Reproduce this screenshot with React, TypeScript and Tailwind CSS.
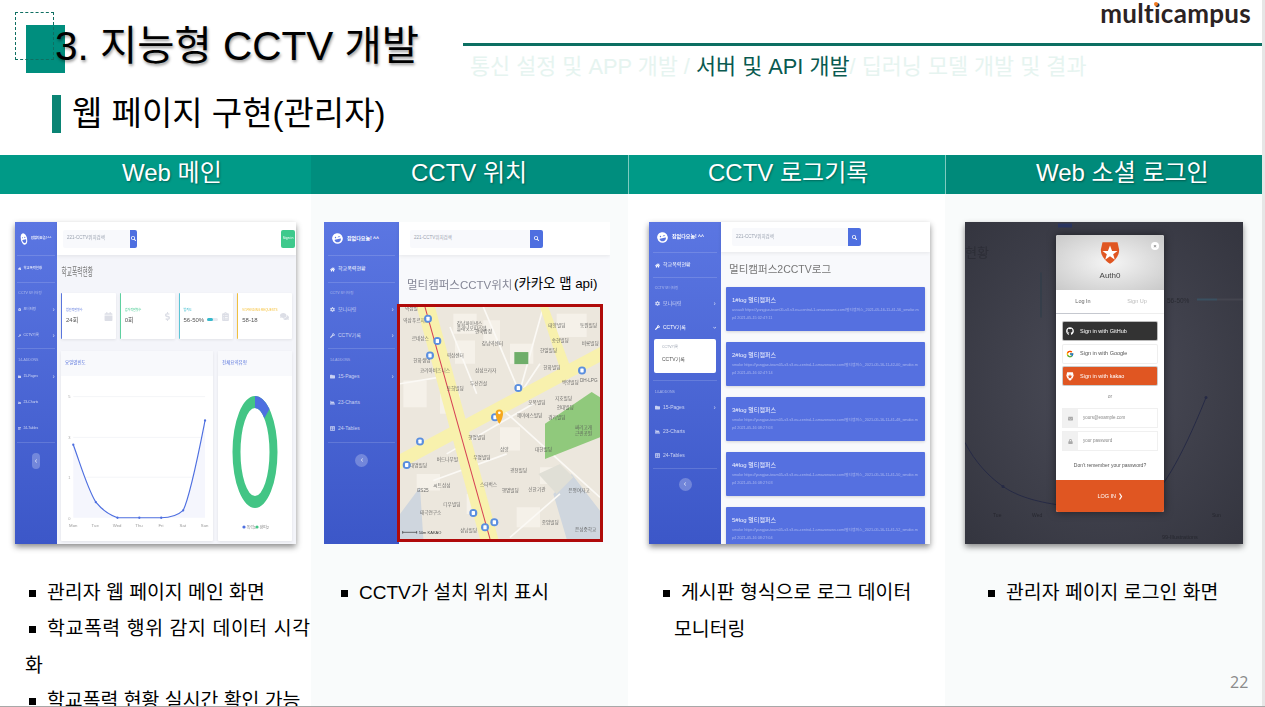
import React from 'react';
import { FaLaughWink, FaHome, FaCog, FaWrench, FaFolder, FaChartArea, FaTable, FaChevronRight, FaChevronLeft, FaChevronDown, FaSearch, FaGithub, FaEnvelope, FaLock, FaCalendar, FaDollarSign, FaClipboardList, FaComments } from 'react-icons/fa';
import { FcGoogle } from 'react-icons/fc';

const sideItems = (open: boolean, tiny: boolean) => {
  const row = open ? 'h-[24px]' : 'h-[26px]';
  return (
    <>
      <div className="mx-[5%] border-t border-white/15" />
      <Item row={row} tiny={tiny} icon={<FaHome />} label="학교폭력현황" strong />
      <div className="mx-[5%] border-t border-white/15" />
      <div className="pl-[8%] pt-[8px] text-[3.5px] text-white/50">CCTV 모니터링</div>
      <Item row={row} tiny={tiny} icon={<FaCog />} label="모니터링" arrow />
      <Item row={row} tiny={tiny} icon={<FaWrench />} label="CCTV기록" arrow={!open} down={open} strong={open} />
      {open && (
        <div className="mx-[5px] h-[34px] rounded-[2px] bg-white px-[8px] py-[6px] text-[#555]">
          <div className="text-[3.5px] text-gray-400">CCTV기록</div>
          <div className="mt-[5px] text-[5px]">CCTV기록</div>
        </div>
      )}
      <div className={`mx-[5%] border-t border-white/15 ${open ? 'mt-[7px]' : ''}`} />
      <div className="pl-[8%] pt-[9px] text-[3.5px] text-white/50">14-ADDONS</div>
      <Item row={row} tiny={tiny} icon={<FaFolder />} label="15-Pages" arrow />
      <Item row={row} tiny={tiny} icon={<FaChartArea />} label="23-Charts" />
      <Item row={row} tiny={tiny} icon={<FaTable />} label="24-Tables" />
      <div className="mx-[5%] border-t border-white/15" />
    </>
  );
};

function Item({ row, tiny, icon, label, arrow, down, strong }: { row: string; tiny: boolean; icon: React.ReactNode; label: string; arrow?: boolean; down?: boolean; strong?: boolean }) {
  return (
    <div className={`flex ${row} items-center ${tiny ? 'gap-[2px] pl-[3px] pr-[2px] text-[3.4px]' : 'gap-[3px] pl-[6px] pr-[5px] text-[5px]'} ${strong ? 'text-white' : 'text-white/70'}`}>
      <span>{icon}</span>
      <span className="flex-1 whitespace-nowrap">{label}</span>
      {arrow && <FaChevronRight className="text-[3.5px]" />}
      {down && <FaChevronDown className="text-[3.5px]" />}
    </div>
  );
}

function Sidebar({ width, head, children, tiny, circleTop }: { width: string; head: string; children: React.ReactNode; tiny?: boolean; circleTop: string }) {
  return (
    <div className={`${width} flex shrink-0 flex-col bg-gradient-to-b from-[#5b76e2] to-[#3c57c8]`}>
      <div className={`flex ${head} items-center ${tiny ? 'gap-[1px] pl-[3px]' : 'gap-[4px] pl-[8px]'}`}>
        <FaLaughWink className={`-rotate-12 text-white ${tiny ? 'scale-x-[0.55] text-[12px]' : 'text-[11px]'}`} />
        <span className={`whitespace-nowrap font-bold text-white ${tiny ? 'text-[3.2px]' : 'text-[5px]'}`}>잠없다요놈! ^^</span>
      </div>
      {children}
      <div className={`flex justify-center ${circleTop}`}>
        <div className={`flex items-center justify-center rounded-full bg-white/25 text-[4px] text-white/70 ${tiny ? 'h-[16px] w-[8px]' : 'h-[13px] w-[13px]'}`}>
          <FaChevronLeft />
        </div>
      </div>
    </div>
  );
}

function TopBar({ h, w, pad, btn, label, small }: { h: string; w: string; pad: string; btn: string; label: string; small?: boolean }) {
  return (
    <div className={`${h} ${pad} flex shrink-0 items-center justify-between bg-white pr-[1px] shadow-[0_1px_4px_rgba(0,0,0,0.08)]`}>
      <div className="flex items-center">
        <div className={`${w} flex h-[18px] items-center rounded-l-[2px] bg-[#f8f9fc] pl-[4px] text-[4.5px] text-gray-400`}>{label}</div>
        <div className={`${btn} flex h-[18px] items-center justify-center rounded-r-[2px] bg-[#4e6fe0] text-[5px] text-white`}>
          <FaSearch />
        </div>
      </div>
      {small && <div className="flex h-[18px] w-[14px] items-center justify-center rounded-[2px] bg-[#3ec98c] text-[3.5px] text-white">Sign in</div>}
    </div>
  );
}

const stats = [
  { label: '범인적발횟수', value: '24회', color: 'border-[#5a76dd]', text: 'text-[#5a76dd]', icon: <FaCalendar /> },
  { label: '검거적발횟수', value: '0회', color: 'border-[#5fd0a0]', text: 'text-[#3ec98c]', icon: <FaDollarSign /> },
  { label: '범죄도', value: '56-50%', color: 'border-[#5cc5d5]', text: 'text-[#36b9cc]', icon: <FaClipboardList />, bar: true },
  { label: '97-PENDING REQUESTS', value: '58-18', color: 'border-[#f0c040]', text: 'text-[#f6c23e]', icon: <FaComments /> },
];

function MainShot() {
  return (
    <Shot className="ml-[15px] w-[281px] blur-[0.5px]">
      <Sidebar width="w-[42px]" head="h-[33px]" tiny circleTop="mt-[10px]">{sideItems(false, true)}</Sidebar>
      <div className="flex min-w-0 flex-1 flex-col bg-[#f4f5fa]">
        <TopBar h="h-[33px]" pad="pl-[6px]" w="w-[67px]" btn="w-[7px]" label="221-CCTV위치검색" small />
        <div className="flex-1 px-[4px]">
          <div className="mt-[9px] origin-left scale-x-[0.52] whitespace-nowrap pl-[1px] text-[11px] leading-[16px] text-[#777]">학교폭력현황</div>
          <div className="mt-[13px] grid grid-cols-4 gap-[4px]">
            {stats.map(s => (
              <div key={s.label} className={`flex h-[46px] items-center rounded-[1px] border-l ${s.color} bg-white pl-[4px] pr-[3px] shadow-[0_1px_3px_rgba(0,0,0,0.08)]`}>
                <div className="min-w-0 flex-1">
                  <div className={`whitespace-nowrap text-[3px] ${s.text}`}>{s.label}</div>
                  <div className="mt-[3px] flex items-center gap-[3px] text-[6px] leading-[8px] text-[#555]">
                    <span>{s.value}</span>
                    {s.bar && <div className="h-[3px] flex-1 rounded-full bg-[#e8eaf0]"><div className="h-full w-1/2 rounded-full bg-[#36b9cc]" /></div>}
                  </div>
                </div>
                <span className="pl-[3px] text-[9px] text-[#dcdee6]">{s.icon}</span>
              </div>
            ))}
          </div>
          <div className="mt-[12px] flex h-[190px] gap-[5px]">
            <div className="flex w-[152px] flex-col rounded-[1px] bg-white shadow-[0_1px_3px_rgba(0,0,0,0.08)]">
              <div className="flex h-[25px] shrink-0 items-center bg-[#f8f9fc] pl-[4px] text-[4.5px] text-[#5a76dd]">요일별빈도</div>
              <svg viewBox="0 0 458 497" className="w-full flex-1">
                <path d="M37 62H434M37 185H434M37 305H434" stroke="#eef0f5" strokeWidth="2" />
                <path d="M37 207C60 270 80 340 105 380C125 405 145 418 170 427H302C330 427 350 422 368 405C390 360 415 230 434 134V427H37Z" fill="#f5f6fd" />
                <path d="M37 207C60 270 80 340 105 380C125 405 145 418 170 427H302C330 427 350 422 368 405C390 360 415 230 434 134" fill="none" stroke="#4e6fe0" strokeWidth="3.5" />
                {[[37, 207], [105, 380], [170, 427], [236, 427], [302, 427], [368, 405], [434, 134]].map(([x, y]) => (
                  <circle key={x} cx={x} cy={y} r="3.5" fill="#4e6fe0" />
                ))}
                {[[62, '5'], [185, '3'], [305, '1'], [430, '0']].map(([y, t]) => (
                  <text key={String(y)} x="22" y={Number(y) + 4} fontSize="12" fill="#aaa">{t}</text>
                ))}
                {['Mon', 'Tue', 'Wed', 'Thu', 'Fri', 'Sat', 'Sun'].map((d, i) => (
                  <text key={d} x={37 + i * 66} y="455" fontSize="13" textAnchor="middle" fill="#999">{d}</text>
                ))}
              </svg>
            </div>
            <div className="flex w-[74px] flex-col rounded-[1px] bg-white shadow-[0_1px_3px_rgba(0,0,0,0.08)]">
              <div className="flex h-[25px] shrink-0 items-center bg-[#f8f9fc] pl-[4px] text-[4.5px] text-[#5a76dd]">전체요역유형</div>
              <svg viewBox="0 0 74 165" className="w-full flex-1">
                <path fillRule="evenodd" d="M14.5 76A22.5 56 0 0 1 59.5 76A22.5 56 0 0 1 14.5 76ZM22.5 76A14.5 44 0 0 0 51.5 76A14.5 44 0 0 0 22.5 76Z" fill="#43c585" />
                <path d="M37 20A22.5 56 0 0 1 51.5 33L46.3 42.3A14.5 44 0 0 0 37 32Z" fill="#4e6fe0" />
                <circle cx="26" cy="151" r="1.6" fill="#4e6fe0" />
                <text x="28.5" y="153" fontSize="4" fill="#888">폭력1</text>
                <circle cx="39" cy="151" r="1.6" fill="#43c585" />
                <text x="41.5" y="153" fontSize="4" fill="#888">왕따2</text>
              </svg>
            </div>
          </div>
        </div>
      </div>
    </Shot>
  );
}

const busStops = [[84, 35], [112, 102], [90, 145], [355, 243], [285, 330], [546, 190], [60, 403], [20, 473], [220, 617], [255, 660], [283, 645]];
const mapLabels: [number, number, string][] = [
  [15, 10, '역삼빌'], [170, 55, '강남파이낸스'], [170, 70, '플래닛오피스텔'], [225, 78, '한국감정'], [245, 115, '강남역센터'], [10, 45, '역삼푸르지오'], [35, 100, '르네상스'],
  [140, 150, '역삼센터'], [40, 165, '한화생명'], [60, 195, '코리아비즈니스'], [225, 195, '삼성프라자'], [140, 250, '동희빌딩'], [210, 235, '두산건설'],
  [445, 60, '태양빌딩'], [540, 60, '동원빌딩'], [455, 105, '송현빌딩'], [545, 115, '비룡빌딩'], [420, 135, '한일빌딩'], [430, 185, '한화빌딩'], [540, 225, 'DH-LPG'],
  [485, 230, '백양빌딩'], [465, 280, '지호빌딩'], [385, 290, '오복빌딩'], [470, 305, '현대빌딩'], [350, 330, '제이에스빌딩'], [445, 335, '경리빌딩'], [205, 395, '행명빌딩'],
  [300, 430, '삼양'], [405, 430, '대한빌딩'], [220, 455, '우명빌딩'], [330, 495, '광천빌딩'], [110, 460, '버드나무빌'], [30, 480, '대명빌딩'], [240, 535, '스타벅스'],
  [100, 540, '씨트삼성'], [50, 555, 'GS25'], [130, 595, '디우빌딩'], [60, 620, '태극연구소'], [305, 555, '행명빌딩'], [385, 550, '신한기관'], [425, 650, '종암빌딩'],
  [505, 555, '은평여자고'], [525, 670, '은성중학교'], [525, 365, '싸리고개'], [525, 382, '근린공원'], [180, 675, '성남빌딩'],
];

function MapShot() {
  return (
    <div className="relative">
      <Shot className="ml-[13px] w-[286px]" light>
        <Sidebar width="w-[75px]" head="h-[33px]" circleTop="mt-[11px]">{sideItems(false, false)}</Sidebar>
        <div className="flex min-w-0 flex-1 flex-col bg-[#f8f9fc]">
          <TopBar h="h-[33px]" pad="pl-[11px]" w="w-[120px]" btn="w-[13px]" label="221-CCTV위치검색" />
          <div className="flex-1 pl-[8px]">
            <div className="mt-[20px] whitespace-nowrap text-[11.5px] leading-[20px] text-[#858796] blur-[0.4px]">멀티캠퍼스CCTV위치</div>
            <div className="-ml-[10px] mt-[9px] h-[238px] w-[206px] border-[3px] border-[#b00a0a] blur-[0.3px]">
              <svg viewBox="0 0 600 695" preserveAspectRatio="none" className="block h-full w-full">
                <rect width="600" height="695" fill="#ece7dd" />
                <path d="M160 20h70v60h-70zM165 100h60v70h-60zM10 220h70v80H10zM120 260h60v60h-60zM250 40h50v70h-50zM330 110h70v60h-70zM470 20h90v70h-90zM300 360h60v70h-60zM50 500h70v50H50zM350 600h70v60h-70zM200 560h40v60h-40zM420 480h50v50h-50z" fill="#f5f1e9" />
                <path d="M0 620L60 540 70 695H0ZM460 560L515 500 600 610V695H500Z" fill="#cfd6de" />
                <path d="M415 500L480 470 520 510 470 560Z" fill="#e0dfd6" />
                <path d="M250 0L360 260M150 60L230 260M0 230L120 210M300 300L600 570M140 440L400 290M100 520L320 440M330 690L480 560M360 260L420 170M430 0L360 250" stroke="#fbf9f5" strokeWidth="5" fill="none" />
                <path d="M435 350L575 255 600 270V390L435 455Z" fill="#90c97c" />
                <rect x="343" y="135" width="42" height="36" fill="#6fae6a" />
                <path d="M420 0H445L515 190 485 200Z" fill="#f8f1ad" />
                <path d="M0 440L600 120V165L0 485Z" fill="#f8f1ad" />
                <path d="M50 0H105L295 695H240Z" fill="#f8f1ad" />
                <path d="M75 0L270 695" stroke="#d64055" strokeWidth="3" />
                {mapLabels.map(([x, y, t]) => (
                  <text key={x + t} x={x} y={y} fontSize="14" fill="#555" opacity="0.85">{t}</text>
                ))}
                {busStops.map(([x, y]) => (
                  <g key={x + '-' + y}>
                    <circle cx={x} cy={y} r="12" fill="#5b8fdf" />
                    <rect x={x - 5} y={y - 6} width="10" height="12" rx="2" fill="#fff" />
                  </g>
                ))}
                <path d="M298 350C288 335 287 325 287 318A11 11 0 0 1 309 318C309 325 308 335 298 350Z" fill="#f5a81c" />
                <circle cx="298" cy="317" r="4" fill="#fff" />
                <path d="M8 675H50M8 671V679M50 671V679" stroke="#333" strokeWidth="2" />
                <text x="56" y="680" fontSize="12" fill="#333">50m KAKAO</text>
              </svg>
            </div>
          </div>
        </div>
      </Shot>
      {/* annotation typed over the screenshot */}
      <span className="absolute left-[203px] top-[54px] whitespace-nowrap text-[13.4px] leading-[16px] text-black">(카카오 맵 api)</span>
    </div>
  );
}

const logs = [
  ['1#log 멀티캠퍼스', 'assault https://yangjae-team05-s3.s3.eu-central-1.amazonaws.com/멀티캠퍼스_2021-05-16-11-41-56_smoke.mp4 2021-05-15 02:47:11'],
  ['2#log 멀티캠퍼스', 'smoke https://yangjae-team05-s3.s3.eu-central-1.amazonaws.com/멀티캠퍼스_2021-05-16-11-42-00_smoke.mp4 2021-05-16 02:47:14'],
  ['3#log 멀티캠퍼스', 'smoke https://yangjae-team05-s3.s3.eu-central-1.amazonaws.com/멀티캠퍼스_2021-05-16-11-41-48_smoke.mp4 2021-05-16 08:27:03'],
  ['4#log 멀티캠퍼스', 'smoke https://yangjae-team05-s3.s3.eu-central-1.amazonaws.com/멀티캠퍼스_2021-05-16-11-41-50_smoke.mp4 2021-05-16 08:27:03'],
  ['5#log 멀티캠퍼스', 'smoke https://yangjae-team05-s3.s3.eu-central-1.amazonaws.com/멀티캠퍼스_2021-05-16-11-41-52_smoke.mp4 2021-05-16 08:27:04'],
];

function LogShot() {
  return (
    <Shot className="ml-[21px] w-[281px] blur-[0.35px]">
      <Sidebar width="w-[72px]" head="h-[30px]" circleTop="mt-[9px]">{sideItems(true, false)}</Sidebar>
      <div className="flex min-w-0 flex-1 flex-col bg-[#f8f9fc]">
        <TopBar h="h-[30px]" pad="pl-[11px]" w="w-[116px]" btn="w-[13px]" label="221-CCTV위치검색" />
        <div className="min-h-0 flex-1 overflow-hidden px-[5px]">
          <div className="pl-[3px] pt-[6px] text-[10.5px] leading-[22px] text-[#777]">멀티캠퍼스2CCTV로그</div>
          <div className="mt-[7px] flex flex-col gap-[11px]">
            {logs.map(([t, d]) => (
              <div key={t} className="h-[44px] shrink-0 rounded-[1px] bg-[#5570e0] px-[6px] pt-[9px] shadow-[0_1px_3px_rgba(0,0,0,0.15)]">
                <div className="text-[6px] leading-[9px] text-white/90">{t}</div>
                <div className="mt-[1px] break-all text-[3.8px] leading-[8px] text-white/45">{d}</div>
              </div>
            ))}
          </div>
        </div>
      </div>
    </Shot>
  );
}

function LoginShot() {
  return (
    <Shot className="ml-[20px] w-[278px] justify-center bg-[radial-gradient(ellipse_at_center,#4b4c58,#34353f)] pl-[12px] pt-[13px] blur-[0.3px]">
      <div className="absolute left-0 top-[22px] text-[13px] leading-[18px] text-[#2d2e37]">현황</div>
      <svg viewBox="0 0 278 321" className="absolute inset-0 h-full w-full">
        <path d="M0 220C10 240 25 255 38 264C50 272 65 278 91 282H180C195 270 215 240 241 175" fill="none" stroke="#262a45" strokeWidth="1" />
        <circle cx="241" cy="175" r="1.5" fill="#262a45" />
        <circle cx="38" cy="264" r="1.5" fill="#262a45" />
        <path d="M76 50V95" stroke="#2c3d48" strokeWidth="1" />
        <path d="M93 1H107V5H93Z" fill="#2a3560" />
        <path d="M232 77H252" stroke="#3a5060" strokeWidth="2" />
        <path d="M252 77H278" stroke="#44454f" strokeWidth="2" />
        <text x="202" y="80" fontSize="6.5" fill="#2a2b33">56-50%</text>
        <text x="28" y="294" fontSize="5" fill="#26272f">Tue</text>
        <text x="67" y="294" fontSize="5" fill="#26272f">Wed</text>
        <text x="247" y="294" fontSize="5" fill="#26272f">Sun</text>
        <text x="197" y="316" fontSize="5.5" fill="#26272f">99-Illustrations</text>
      </svg>
      <div className="relative flex h-[277px] w-[108px] flex-col overflow-hidden rounded-[2px] bg-white shadow-[0_0_8px_rgba(0,0,0,0.5)]">
        <div className="relative flex h-[55px] shrink-0 flex-col items-center bg-[radial-gradient(ellipse_at_center,#f5f5f5,#c9c9c9)] pt-[5px]">
          <svg viewBox="0 0 24 28" className="h-[26px] w-[20px]">
            <path d="M3 1H21L23 10C23 18 17 24 12 27C7 24 1 18 1 10Z" fill="#e05622" />
            <path d="M12 5L14.5 11.5H21L15.8 15.5 17.8 22 12 18 6.2 22 8.2 15.5 3 11.5H9.5Z" fill="#fff" />
          </svg>
          <div className="mt-[4px] text-[8px] leading-[12px] text-[#444]">Auth0</div>
          <div className="absolute right-[5px] top-[7px] flex h-[8px] w-[8px] items-center justify-center rounded-full bg-white text-[6px] leading-none text-[#666]">×</div>
        </div>
        <div className="flex h-[24px] shrink-0 text-[5.5px]">
          <div className="flex flex-1 items-center justify-center border-b border-[#c5c8cf] text-[#666]">Log In</div>
          <div className="flex flex-1 items-center justify-center border-b border-[#eee] text-[#bbb]">Sign Up</div>
        </div>
        <div className="flex flex-col gap-[4.5px] px-[7px] pt-[8px] text-[5.5px]">
          <div className="flex h-[18px] items-center gap-[6px] rounded-[1px] bg-[#333] pl-[3px] text-white ring-1 ring-[#bbb]"><FaGithub className="text-[8px]" />Sign in with GitHub</div>
          <div className="flex h-[18px] items-center gap-[6px] rounded-[1px] bg-white pl-[3px] text-[#555] ring-1 ring-[#eee]"><FcGoogle className="text-[8px]" />Sign in with Google</div>
          <div className="flex h-[18px] items-center gap-[6px] rounded-[1px] bg-[#e05622] pl-[3px] text-white ring-1 ring-[#ccc]">
            <svg viewBox="0 0 24 28" className="h-[9px] w-[8px]"><path d="M3 1H21L23 10C23 18 17 24 12 27C7 24 1 18 1 10Z" fill="#fff" /><path d="M12 6L14 12H20L15 15.5 17 21 12 18 7 21 9 15.5 4 12H10Z" fill="#e05622" /></svg>
            Sign in with kakao
          </div>
        </div>
        <div className="pb-[9px] pt-[8px] text-center text-[5px] leading-[7px] text-[#888]">or</div>
        <div className="flex flex-col gap-[5px] px-[7px] text-[4.5px] text-[#888]">
          <div className="flex h-[18px] items-center ring-1 ring-[#f0f0f0]"><span className="mr-[5px] flex h-full w-[15px] items-center justify-center bg-[#f1f1f1] text-[5px] text-[#aaa]"><FaEnvelope /></span>yours@example.com</div>
          <div className="flex h-[18px] items-center ring-1 ring-[#f0f0f0]"><span className="mr-[5px] flex h-full w-[15px] items-center justify-center bg-[#f1f1f1] text-[5px] text-[#aaa]"><FaLock /></span>your password</div>
        </div>
        <div className="mt-[11px] text-center text-[5px] leading-[8px] text-[#555]">Don't remember your password?</div>
        <div className="mt-auto flex h-[32px] shrink-0 items-center justify-center bg-[#e05622] text-[5.5px] text-white">LOG IN ❯</div>
      </div>
    </Shot>
  );
}

function Shot({ className, children, light }: { className: string; children: React.ReactNode; light?: boolean }) {
  return (
    <div className={`relative flex h-[322px] overflow-hidden ${light ? '' : 'shadow-[0_3px_6px_rgba(0,0,0,0.45)]'} ${className}`}>
      {children}
    </div>
  );
}

function Bullet({ text, className }: { text: string; className: string }) {
  return (
    <div className={`flex h-[36px] items-center whitespace-nowrap ${className}`}>
      <span className="mr-[11px] h-[7px] w-[7px] shrink-0 bg-black" />
      <span>{text}</span>
    </div>
  );
}

const heads = [
  { label: 'Web 메인', cls: 'w-[311px] bg-[#009a87] pl-[122px]' },
  { label: 'CCTV 위치', cls: 'w-[317px] bg-[#008e7e] pl-[100px]' },
  { label: 'CCTV 로그기록', cls: 'w-[317px] border-l border-[#7fcabf] bg-[#009a87] pl-[79px]' },
  { label: 'Web 소셜 로그인', cls: 'w-[317px] border-l border-[#7fcabf] bg-[#008a7a] pl-[90px]' },
];

const App: React.FC = () => {
  return (
    <div className="relative flex h-[707px] w-[1265px] flex-col overflow-hidden border-b border-[#a8a8a8] bg-white font-['Liberation_Sans','Noto_Sans_CJK_KR',sans-serif] text-black">
      <div className="flex min-h-0 w-[1262px] flex-1 flex-col">
        {/* Slide header */}
        <div className="relative flex h-[155px] shrink-0 flex-col">
          <div className="absolute left-[26px] top-[25px] h-[48px] w-[39px] bg-[#008e7e]" />
          <div className="absolute left-[15px] top-[12px] h-[48px] w-[39px] border border-dashed border-[#0f6f62]" />
          <div className="relative flex h-[91px] items-start">
            <h1 className="ml-[55px] mt-[21px] w-[408px] whitespace-nowrap text-[40.5px] leading-[50px] [text-shadow:1px_2px_3px_rgba(0,0,0,0.4)]">3. 지능형 CCTV 개발</h1>
            <div className="flex-1">
              <div className="flex justify-end pr-[11px]">
                <div className="relative text-[26px] font-bold leading-[26px] tracking-[0.3px] text-[#2b2323] font-['Lato','Liberation_Sans',sans-serif]">
                  multicampus
                  <span className="absolute left-[54px] top-[2px] h-[4px] w-[4px] rounded-full bg-[#f07a20]" />
                </div>
              </div>
              <div className="mt-[17px] h-[3px] bg-[#0c6f62]" />
              <div className="ml-[7px] mt-[8px] whitespace-nowrap text-[21.8px] leading-[26px] text-[#e6f4f0]">
                통신 설정 및 APP 개발 / <span className="text-[#0a5a50]">서버 및 API 개발</span>/ 딥러닝 모델 개발 및 결과
              </div>
            </div>
          </div>
          <div className="ml-[52px] mt-[4px] flex items-center">
            <span className="h-[38px] w-[9px] bg-[#0a8474]" />
            <h2 className="ml-[11px] whitespace-nowrap text-[33px] leading-[38px]">웹 페이지 구현(관리자)</h2>
          </div>
        </div>

        {/* Column titles */}
        <div className="flex h-[39px] shrink-0">
          {heads.map(h => (
            <div key={h.label} className={`flex items-center whitespace-nowrap pb-[3px] text-[24px] text-white [text-shadow:1px_1px_2px_rgba(0,0,0,0.35)] ${h.cls}`}>{h.label}</div>
          ))}
        </div>

        {/* Columns */}
        <div className="flex min-h-0 flex-1 overflow-hidden text-[19.4px]">
          <div className="w-[311px] shrink-0 bg-white pt-[28px]">
            <MainShot />
            <div className="mt-[31px]">
              <Bullet text="관리자 웹 페이지 메인 화면" className="pl-[29px]" />
              <Bullet text="학교폭력 행위 감지 데이터 시각" className="pl-[29px] tracking-[0.6px]" />
              <div className="h-[36px] pl-[25px] leading-[36px]">화</div>
              <Bullet text="학교폭력 현황 실시간 확인 가능" className="pl-[29px]" />
            </div>
          </div>
          <div className="w-[317px] shrink-0 bg-[#f9fbfb] pt-[28px]">
            <MapShot />
            <div className="mt-[31px] text-[19px]">
              <Bullet text="CCTV가 설치 위치 표시" className="pl-[30px]" />
            </div>
          </div>
          <div className="w-[317px] shrink-0 bg-white pt-[28px]">
            <LogShot />
            <div className="mt-[31px]">
              <Bullet text="게시판 형식으로 로그 데이터" className="pl-[35px]" />
              <div className="h-[36px] pl-[46px] leading-[36px]">모니터링</div>
            </div>
          </div>
          <div className="w-[317px] shrink-0 bg-[#f9fbfb] pt-[28px]">
            <LoginShot />
            <div className="mt-[31px]">
              <Bullet text="관리자 페이지 로그인 화면" className="pl-[43px]" />
            </div>
          </div>
        </div>
      </div>
      {/* window edge */}
      <div className="absolute right-0 top-0 h-full w-[3px] bg-[#e6e6e6]" />
      <span className="absolute left-[1230px] top-[672px] text-[16px] leading-[20px] text-[#8a8a8a] font-['Open_Sans',sans-serif]">22</span>
    </div>
  );
};

export default App;
